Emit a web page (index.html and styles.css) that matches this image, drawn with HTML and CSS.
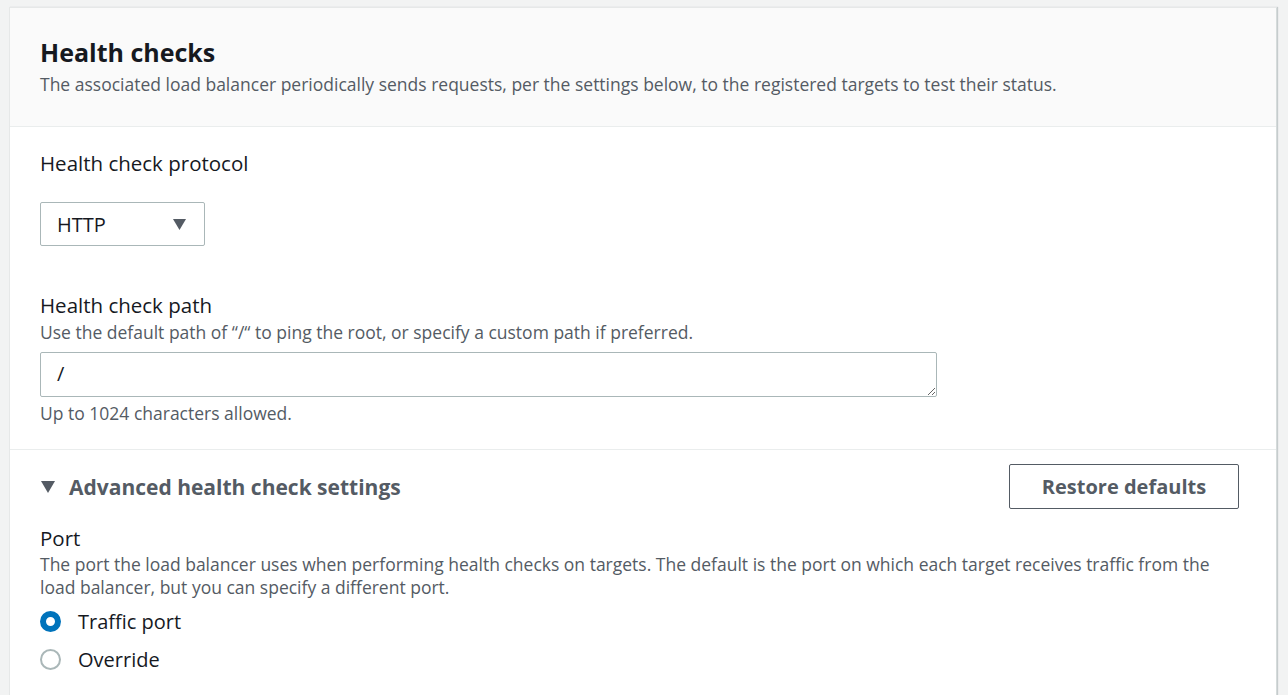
FILE: index.html
```html
<!DOCTYPE html>
<html lang="en">
<head>
<meta charset="utf-8">
<title>Health checks</title>
<link rel="stylesheet" href="styles.css">
</head>
<body>
<section class="panel">
  <header class="panel-header">
    <h2 class="panel-title">Health checks</h2>
    <p class="panel-desc">The associated load balancer periodically sends requests, per the settings below, to the registered targets to test their status.</p>
  </header>

  <div class="panel-body">
    <div class="field field-protocol">
      <div class="field-label">Health check protocol</div>
      <div class="select">
        <span class="select-value">HTTP</span>
        <svg class="select-caret" width="13" height="11" viewBox="0 0 13 11" aria-hidden="true"><path d="M0 0 H13 L6.5 11 Z" fill="#545b64"/></svg>
      </div>
    </div>

    <div class="field field-path">
      <div class="field-label">Health check path</div>
      <div class="field-desc">Use the default path of “/“ to ping the root, or specify a custom path if preferred.</div>
      <textarea class="textarea" rows="1">/</textarea>
      <div class="field-hint">Up to 1024 characters allowed.</div>
    </div>
  </div>

  <div class="panel-advanced">
    <div class="advanced-head">
      <div class="expander">
        <svg class="expander-caret" width="14" height="12" viewBox="0 0 14 12" aria-hidden="true"><path d="M0 0 H14 L7 12 Z" fill="#545b64"/></svg>
        <span class="expander-title">Advanced health check settings</span>
      </div>
      <button class="btn" type="button">Restore defaults</button>
    </div>

    <div class="field field-port">
      <div class="field-label">Port</div>
      <div class="field-desc">The port the load balancer uses when performing health checks on targets. The default is the port on which each target receives traffic from the load balancer, but you can specify a different port.</div>
      <div class="radio-group">
        <label class="radio-row"><span class="radio radio-checked"></span><span class="radio-label">Traffic port</span></label>
        <label class="radio-row"><span class="radio"></span><span class="radio-label">Override</span></label>
      </div>
    </div>
  </div>
</section>
</body>
</html>
```
FILE: styles.css
```css
* { box-sizing: border-box; }

html, body {
  margin: 0;
  padding: 0;
  background: #f2f3f3;
  height: 100%;
  overflow: hidden;
}

body {
  font-family: "Open Sans", "Noto Sans", sans-serif;
  color: #16191f;
  padding: 7px 0 0 9px;
}

.panel {
  width: 1268px;
  height: 688px;
  overflow: hidden;
  background: #ffffff;
  border: 1px solid #e6e8e8;
  border-bottom: none;
  border-right-color: #d5dbdb;
  box-shadow: 1px 0 1px rgba(0, 28, 36, 0.18);
}

.panel-header {
  background: #fafafa;
  border-bottom: 1px solid #eaeded;
  padding: 29px 30px 31px;
}

.panel-title {
  margin: 0;
  font-size: 25px;
  line-height: 30px;
  font-weight: 700;
  color: #16191f;
}

.panel-desc {
  margin: 6px 0 0;
  font-size: 17.5px;
  line-height: 22px;
  color: #545b64;
}

.panel-body {
  padding: 24px 30px 25px;
  border-bottom: 1px solid #eaeded;
}

.field-label {
  font-size: 20.5px;
  line-height: 25px;
  color: #16191f;
}

.field-desc {
  font-size: 17.5px;
  line-height: 23px;
  color: #545b64;
}

.field-hint {
  margin-top: 5px;
  font-size: 17.5px;
  line-height: 22px;
  color: #545b64;
}

.select {
  margin-top: 26px;
  width: 165px;
  height: 44px;
  border: 1px solid #aab7b8;
  border-radius: 2px;
  display: flex;
  align-items: center;
  justify-content: space-between;
  padding: 0 18px 0 16px;
  background: #fff;
}

.select-value {
  font-size: 20px;
  color: #16191f;
}

.select-caret { display: block; }

.field-path { margin-top: 47px; }

.field-path .field-desc { margin-top: 3px; }

.textarea {
  display: block;
  margin-top: 8px;
  width: 897px;
  height: 45px;
  border: 1px solid #aab7b8;
  border-radius: 2px;
  padding: 8px 16px;
  font-family: "Open Sans", "Noto Sans", sans-serif;
  font-size: 20px;
  line-height: 25px;
  color: #16191f;
  resize: both;
  overflow: hidden;
  background: #fff;
}

.panel-advanced {
  padding: 14px 37px 0 30px;
}

.advanced-head {
  display: flex;
  align-items: center;
  justify-content: space-between;
}

.expander {
  display: flex;
  align-items: center;
  gap: 14px;
  color: #545b64;
}

.expander-caret { display: block; margin-left: 1px; }

.expander-title {
  font-size: 21px;
  font-weight: 700;
  line-height: 26px;
}

.btn {
  width: 230px;
  height: 45px;
  border: 1px solid #545b64;
  border-radius: 2px;
  background: #fff;
  font-family: "Open Sans", "Noto Sans", sans-serif;
  font-size: 20px;
  font-weight: 700;
  color: #545b64;
  padding: 0;
}

.field-port { margin-top: 17px; }

.field-port .field-desc { margin-top: 2px; }

.radio-group {
  margin-top: 3px;
  display: flex;
  flex-direction: column;
}

.radio-row {
  display: flex;
  align-items: center;
  height: 38px;
  gap: 17px;
}

.radio {
  width: 21px;
  height: 21px;
  border-radius: 50%;
  border: 2px solid #aab7b8;
  background: #fff;
  flex: none;
}

.radio-checked {
  border: 6px solid #0073bb;
}

.radio-label {
  font-size: 20px;
  line-height: 25px;
  color: #16191f;
}
```
